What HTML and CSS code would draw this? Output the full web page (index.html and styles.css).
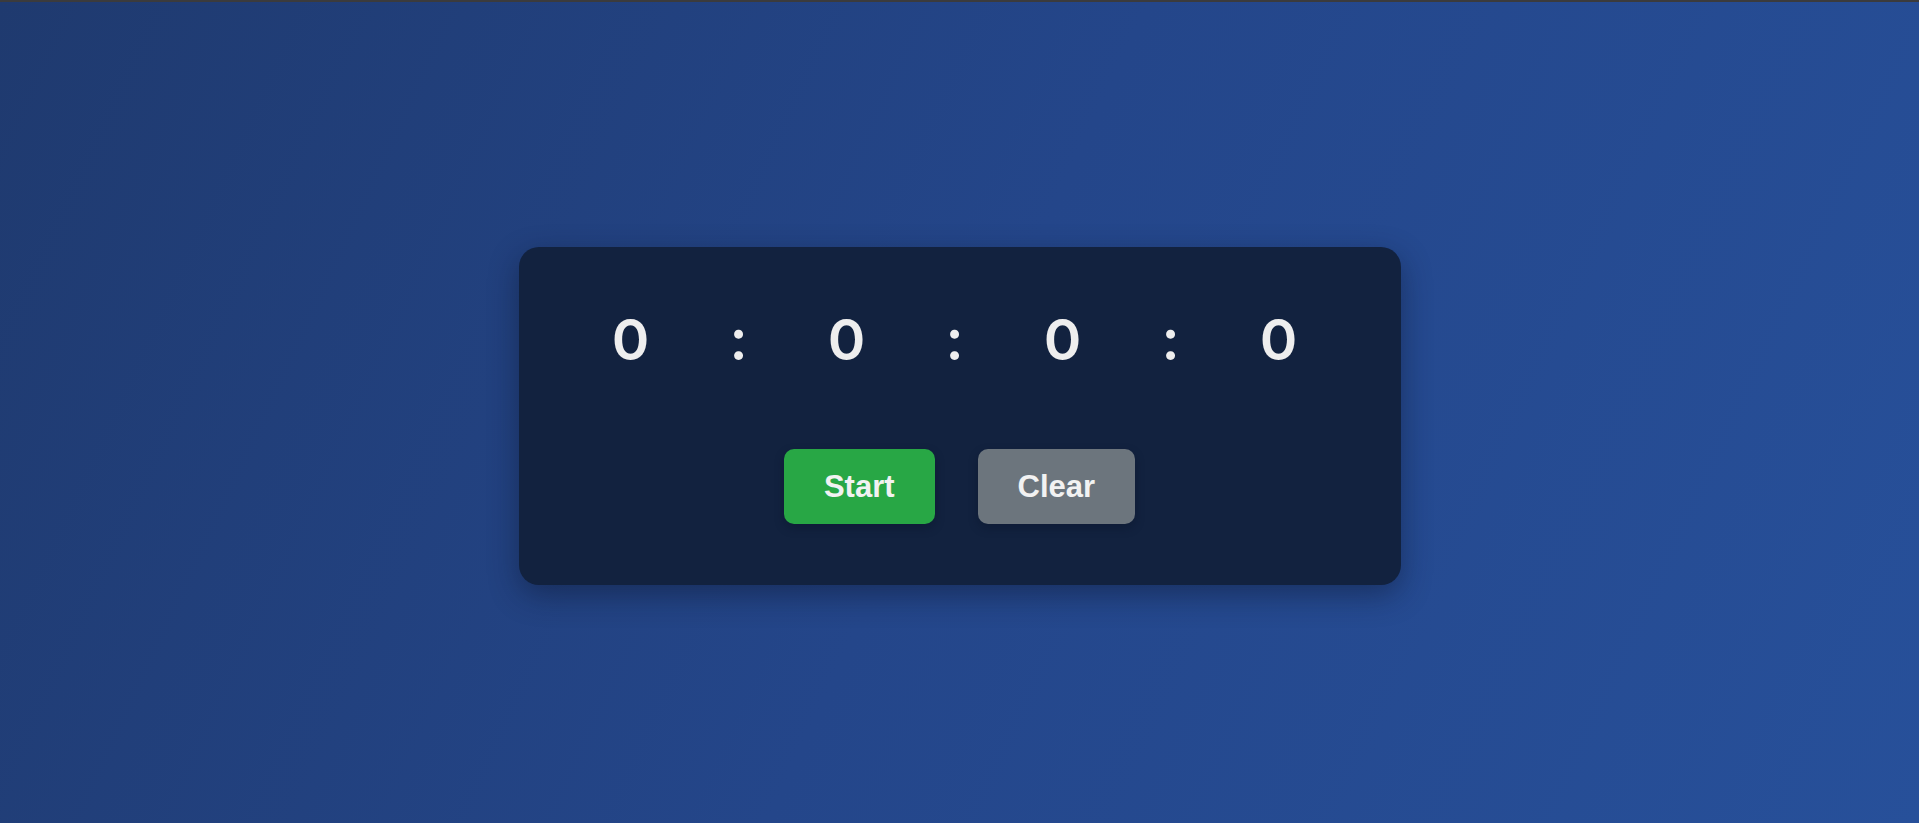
FILE: index.html
```html
<!DOCTYPE html>
<html lang="en">
<head>
<meta charset="utf-8">
<title>Stopwatch</title>
<link rel="stylesheet" href="styles.css">
</head>
<body>
<div class="topbar"></div>
<main class="stage">
  <section class="card">
    <div class="display">
      <span class="cell">0</span>
      <span class="cell sep">:</span>
      <span class="cell">0</span>
      <span class="cell sep">:</span>
      <span class="cell">0</span>
      <span class="cell sep">:</span>
      <span class="cell">0</span>
    </div>
    <div class="controls">
      <button class="btn btn-start">Start</button>
      <button class="btn btn-clear">Clear</button>
    </div>
  </section>
</main>
</body>
</html>
```
FILE: styles.css
```css
* { box-sizing: border-box; }
html, body { margin: 0; padding: 0; height: 100%; }
body {
  display: flex;
  flex-direction: column;
  background: linear-gradient(115deg, #1f3a6f 0%, #24468a 50%, #27509a 100%);
  font-family: "Liberation Sans", Arial, sans-serif;
  overflow: hidden;
}
.topbar {
  height: 2px;
  background: #3b3b3d;
  flex: none;
}
.stage {
  flex: 1;
  display: flex;
  justify-content: center;
  align-items: flex-start;
  padding-top: 245px;
}
.card {
  width: 882px;
  height: 338px;
  background: #12223f;
  border-radius: 20px;
  box-shadow: 0 10px 30px rgba(10, 20, 45, 0.45);
  display: flex;
  flex-direction: column;
  align-items: center;
  padding-top: 60px;
}
.display {
  display: flex;
  padding-right: 10px;
  color: #eeeeee;
  font-family: Inter, "Noto Sans", sans-serif;
  font-weight: 600;
  font-size: 57px;
  line-height: 66px;
}
.cell {
  width: 108px;
  text-align: center;
}
.controls {
  display: flex;
  gap: 43px;
  margin-top: 76px;
}
.btn {
  font-family: "Liberation Sans", Arial, sans-serif;
  font-weight: bold;
  font-size: 31px;
  line-height: 35px;
  padding: 20px 40px;
  border: none;
  border-radius: 10px;
  color: #f2f2f2;
  box-shadow: 0 4px 10px rgba(8, 16, 36, 0.35);
}
.btn-start { background: #28a745; }
.btn-clear { background: #6c757d; }
```
